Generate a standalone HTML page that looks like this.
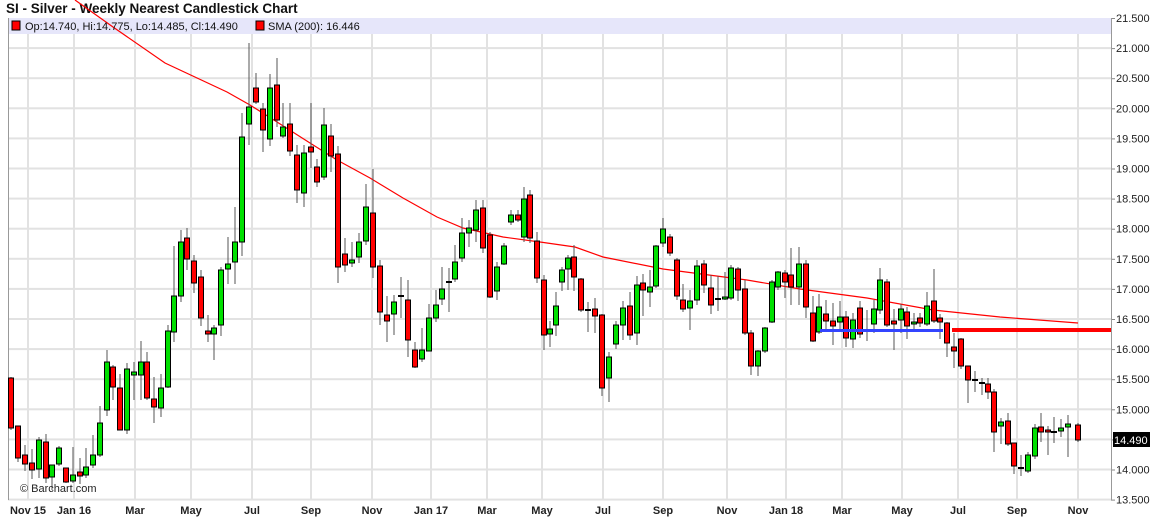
<!DOCTYPE html>
<html><head><meta charset="utf-8"><style>
body{margin:0;width:1166px;height:521px;background:#fff;overflow:hidden;font-family:"Liberation Sans",sans-serif}
svg{position:absolute;left:0;top:0}
</style></head><body>
<svg id="s" width="1166" height="521" xmlns="http://www.w3.org/2000/svg" font-family="Liberation Sans, sans-serif">
<text x="6" y="13" font-size="13.5" font-weight="bold" fill="#111">SI - Silver - Weekly Nearest Candlestick Chart</text>
<rect x="8" y="18" width="1103" height="16" fill="#e6e6fa"/>
<g id="grid"></g>
<line x1="8.5" y1="18" x2="8.5" y2="500" stroke="#999" stroke-width="1"/>
<line x1="1111.5" y1="18" x2="1111.5" y2="500" stroke="#999" stroke-width="1"/>
<g id="yl" font-size="11" fill="#222"></g>
<g id="xl" font-size="11" font-weight="bold" fill="#222"></g>
<polyline fill="none" stroke="#f00" stroke-width="1.2" points="75,0 113,27 165,63 227,92 250,105 277,122 310,143 337,160 370,178 403,198 437,217 463,228 503,237 540,242 575,247 603,257 663,269 747,280 800,289 867,298 933,310 1000,317 1078,323"/>
<g id="c"></g>
<rect x="820" y="329" width="123" height="3" fill="#3344ff"/>
<rect x="952" y="328" width="159" height="4" fill="#f00"/>
<rect x="12" y="21" width="8" height="9" fill="#f00" stroke="#000" stroke-width="1"/>
<text x="25" y="30" font-size="11" fill="#111">Op:14.740, Hi:14.775, Lo:14.485, Cl:14.490</text>
<rect x="256" y="21" width="8" height="9" fill="#f00" stroke="#000" stroke-width="1"/>
<text x="268" y="30" font-size="11" fill="#111">SMA (200): 16.446</text>
<text x="20" y="492" font-size="11" fill="#222">© Barchart.com</text>
<rect x="1113" y="432" width="37" height="15" fill="#000"/>
<text x="1114" y="444" font-size="11" fill="#fff">14.490</text>
</svg>
<script>
var N="http://www.w3.org/2000/svg",s=document.getElementById('s');
function el(p,t,a){var e=document.createElementNS(N,t);for(var k in a)e.setAttribute(k,a[k]);p.appendChild(e);return e}
var g=document.getElementById('grid'),yl=document.getElementById('yl'),xl=document.getElementById('xl');
for(var i=0;i<=16;i++){var y=18+i*30.1;if(i>0)el(g,'rect',{x:8,y:y-1,width:1103,height:2,fill:'#e2e2e2'});el(g,'rect',{x:1111,y:y,width:4,height:1,fill:'#888'});
var t=el(yl,'text',{x:1116,y:y+4});t.textContent=(21.5-i*0.5).toFixed(3);}
var ms=[[28,'Nov 15'],[74,'Jan 16'],[135,'Mar'],[191,'May'],[252,'Jul'],[311,'Sep'],[372,'Nov'],[431,'Jan 17'],[487,'Mar'],[542,'May'],[603,'Jul'],[663,'Sep'],[727,'Nov'],[786,'Jan 18'],[842,'Mar'],[902,'May'],[958,'Jul'],[1017,'Sep'],[1078,'Nov']];
ms.forEach(function(m){el(g,'rect',{x:m[0]-1,y:34,width:2,height:466,fill:'#e2e2e2'});var t=el(xl,'text',{x:m[0],y:514,'text-anchor':'middle'});t.textContent=m[1];});
// x, open, close, high, low (pixel y)
var d=[[11,378,428,377,430],[18,426,458,426,462],[25,455,464,445,471],[32,463,470,449,479],[39,469,440,437,478],[46,442,478,434,483],[52,477,465,465,490],[59,464,448,446,466],[66,468,482,468,483],[73,481,475,447,483],[80,472,476,458,484],[86,475,467,448,478],[93,465,455,435,468],[100,455,423,406,457],[107,410,362,350,416],[113,367,387,365,400],[120,388,430,374,430],[127,430,369,363,434],[134,375,372,362,400],[141,375,362,341,400],[147,362,398,352,400],[154,399,407,377,423],[161,408,388,374,417],[168,387,331,325,388],[174,332,296,246,342],[181,296,242,230,302],[187,238,259,228,270],[194,261,283,255,293],[201,277,318,270,326],[208,331,334,315,342],[214,334,328,325,360],[221,325,270,267,336],[228,269,264,237,284],[235,262,242,207,284],[242,242,137,113,256],[249,124,107,43,145],[256,88,102,73,104],[263,109,130,103,152],[270,139,88,74,146],[277,85,120,58,127],[283,136,127,103,138],[290,124,151,103,156],[297,155,190,145,203],[304,193,153,145,207],[311,147,152,103,168],[317,167,182,159,187],[324,177,125,108,180],[331,136,156,124,172],[338,154,267,146,283],[345,254,265,238,272],[352,263,260,242,267],[359,257,242,233,263],[366,241,207,184,245],[373,213,267,169,278],[380,266,312,260,325],[387,315,321,296,342],[394,314,302,295,335],[401,296,296,277,318],[408,300,340,280,357],[415,350,367,342,368],[422,359,350,328,362],[429,351,318,304,348],[436,318,305,290,322],[442,299,289,267,305],[449,282,282,268,312],[455,279,262,245,282],[462,258,233,218,262],[469,233,228,220,247],[476,230,210,200,242],[483,208,248,200,253],[490,235,297,232,298],[497,291,267,262,300],[504,264,246,243,265],[511,222,215,210,225],[518,215,220,210,222],[524,237,199,187,242],[530,195,238,190,243],[537,241,278,232,283],[544,280,335,275,350],[550,334,329,321,347],[556,325,306,292,336],[562,282,270,267,291],[568,269,258,255,290],[574,257,277,245,291],[581,279,310,278,312],[588,310,311,302,332],[595,309,316,298,333],[602,315,388,314,396],[609,378,357,352,402],[616,344,325,321,349],[623,325,308,301,340],[630,306,335,292,340],[637,333,285,276,345],[643,283,290,274,316],[650,292,287,270,307],[656,286,246,245,288],[663,243,229,218,247],[670,237,253,234,256],[677,260,296,258,300],[683,300,309,284,312],[690,308,301,290,330],[697,300,266,260,305],[704,264,285,260,293],[711,288,305,275,314],[718,299,299,276,311],[725,299,297,272,300],[731,298,268,265,300],[738,269,290,267,301],[745,289,333,280,335],[751,333,366,330,375],[758,366,351,350,376],[765,351,328,327,353],[772,322,282,280,323],[778,287,272,271,290],[785,273,282,270,298],[791,275,287,248,305],[799,287,264,247,305],[806,264,307,260,318],[813,313,341,296,342],[819,332,307,294,334],[826,314,321,300,331],[833,321,326,303,345],[840,322,317,301,332],[846,317,338,311,347],[853,339,320,313,348],[860,308,334,301,338],[867,330,330,310,341],[874,324,309,300,333],[880,310,280,268,314],[887,282,325,279,327],[894,321,324,309,350],[901,320,309,304,333],[907,312,326,307,339],[914,324,322,313,332],[920,318,323,313,327],[927,324,306,292,326],[934,301,321,269,323],[940,318,322,314,339],[947,323,343,322,357],[954,347,351,333,368],[961,339,366,338,369],[968,366,380,366,403],[975,380,380,371,392],[982,383,383,378,395],[988,384,392,378,399],[994,392,432,389,452],[1001,426,422,418,444],[1008,421,444,413,446],[1014,443,466,443,474],[1021,468,468,455,476],[1028,471,455,452,473],[1035,456,428,424,459],[1041,427,432,413,442],[1048,430,432,426,455],[1054,432,432,417,443],[1061,431,428,419,437],[1068,427,424,415,457],[1078,425,440,423,442]];
var c=document.getElementById('c');
d.forEach(function(k){var x=k[0],o=k[1],cl=k[2];
el(c,'rect',{x:x-0.5,y:k[3],width:1,height:k[4]-k[3],fill:'#555'});
var top=Math.min(o,cl),h=Math.abs(o-cl);
if(h<2){el(c,'rect',{x:x-3,y:top-1,width:6,height:2,fill:'#000'});}
else el(c,'rect',{x:x-2.5,y:top,width:5,height:h,fill:cl<o?'#00e000':'#f00',stroke:'#000','stroke-width':1});
});
</script>
</body></html>
